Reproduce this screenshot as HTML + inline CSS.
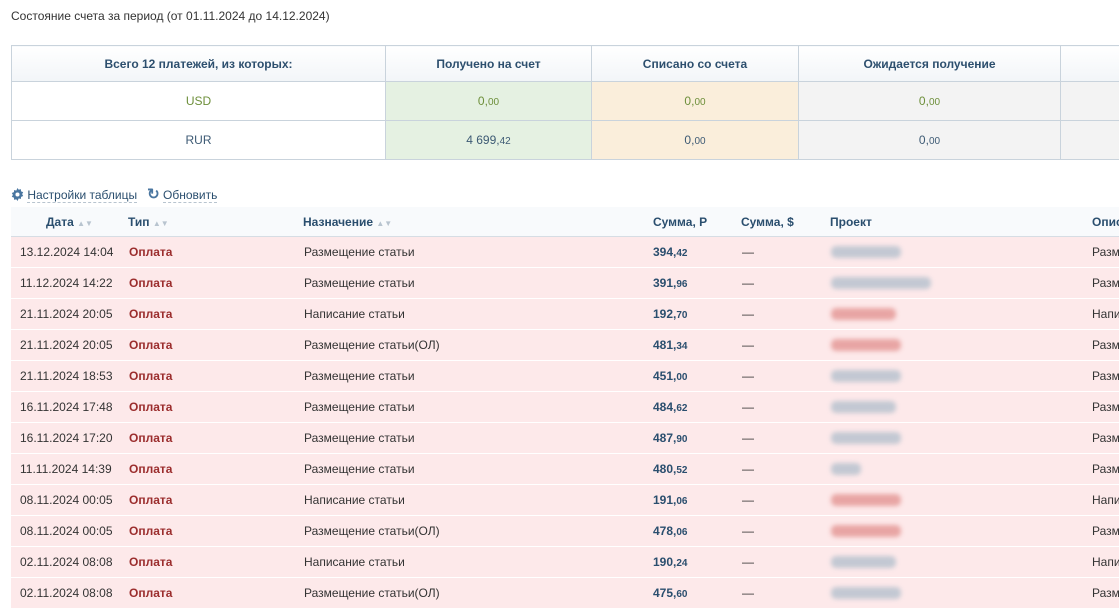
<!DOCTYPE html>
<html><head><meta charset="utf-8"><style>
*{box-sizing:border-box;margin:0;padding:0}
body{width:1119px;height:603px;overflow:hidden;background:#fff;font-family:"Liberation Sans",Arial,sans-serif;font-size:12px;color:#333;position:relative}
.abs{position:absolute}
.title{left:11px;top:9px;font-size:12px;color:#333}
table.sum{position:absolute;left:11px;top:45px;border-collapse:collapse;width:1130px}
.sum td{border:1px solid #c9d3dc;text-align:center;font-size:12px}
.sum tr.h td{height:36px;background:linear-gradient(#fff,#f2f5f8);font-weight:bold;color:#2d4f6e}
.sum tr.r td{height:39px;color:#3d5a74}
.g{background:#e5f1e2}.o{background:#faeedb}.gr{background:#f3f3f3}
.sm{font-size:10px}
.green{color:#6d8f3a!important}
.tools{left:11px;top:185px;color:#2a4e6e;font-size:12px}
.tools span.l{border-bottom:1px dashed #b8c4cf}
.th{position:absolute;top:207px;left:11px;width:1108px;height:30px;background:#f8fafc;border-bottom:1px solid #d6dde4}
.th div{position:absolute;top:8px;font-weight:bold;color:#2a4e6e}
.arr{color:#b8c4cf;font-size:8px;font-weight:normal}
.row{position:absolute;left:11px;width:1108px;height:30px;background:#fde9ea}
.row div{position:absolute;top:8px}
.t{color:#9b2d2d;font-weight:bold}
.s{font-weight:bold;color:#2a4e6e}
.s i{font-style:normal;font-size:10px}
.blur{position:absolute;top:9px;height:12px;border-radius:5px;filter:blur(2.5px);opacity:.85}
</style></head><body>
<div class="abs title">Состояние счета за период (от 01.11.2024 до 14.12.2024)</div>
<table class="sum">
<tr class="h"><td style="width:374px;height:35px">Всего 12 платежей, из которых:</td><td style="width:206px">Получено на счет</td><td style="width:207px">Списано со счета</td><td style="width:262px">Ожидается получение</td><td></td></tr>
<tr class="r"><td class="green">USD</td><td class="g green">0,<span class="sm">00</span></td><td class="o green">0,<span class="sm">00</span></td><td class="gr green">0,<span class="sm">00</span></td><td class="gr"></td></tr>
<tr class="r"><td style="height:38px">RUR</td><td class="g">4 699,<span class="sm">42</span></td><td class="o">0,<span class="sm">00</span></td><td class="gr">0,<span class="sm">00</span></td><td class="gr"></td></tr>
</table>
<div class="abs tools"><svg width="13" height="13" viewBox="0 0 16 16" style="vertical-align:-2px"><path fill="#4a76a0" d="M8 0l1.5 2.2 2.6-.8.3 2.7 2.6 1-1.3 2.4 1.3 2.4-2.6 1-.3 2.7-2.6-.8L8 16l-1.5-2.2-2.6.8-.3-2.7-2.6-1L2.3 8.5 1 6.1l2.6-1 .3-2.7 2.6.8z"/><circle cx="8" cy="8" r="2.5" fill="#fff"/></svg> <span class="l">Настройки таблицы</span> &nbsp; <span style="font-size:15px;font-weight:bold;color:#4a76a0">&#8635;</span> <span class="l">Обновить</span></div>
<div class="th">
<div style="left:35px">Дата <span class="arr">&#9650;&#9660;</span></div>
<div style="left:117px">Тип <span class="arr">&#9650;&#9660;</span></div>
<div style="left:292px">Назначение <span class="arr">&#9650;&#9660;</span></div>
<div style="left:642px">Сумма, Р</div>
<div style="left:730px">Сумма, $</div>
<div style="left:819px">Проект</div>
<div style="left:1081px">Опис</div>
</div>
<div id="rows"></div>
<script>
var d=[["13.12.2024 14:04","Размещение статьи","394","42",0,70],["11.12.2024 14:22","Размещение статьи","391","96",0,100],["21.11.2024 20:05","Написание статьи","192","70",1,65],["21.11.2024 20:05","Размещение статьи(ОЛ)","481","34",1,70],["21.11.2024 18:53","Размещение статьи","451","00",0,70],["16.11.2024 17:48","Размещение статьи","484","62",0,65],["16.11.2024 17:20","Размещение статьи","487","90",0,70],["11.11.2024 14:39","Размещение статьи","480","52",0,30],["08.11.2024 00:05","Написание статьи","191","06",1,70],["08.11.2024 00:05","Размещение статьи(ОЛ)","478","06",1,70],["02.11.2024 08:08","Написание статьи","190","24",0,65],["02.11.2024 08:08","Размещение статьи(ОЛ)","475","60",0,70]];
var h="";d.forEach(function(r,i){var y=237+i*31;h+='<div class="row" style="top:'+y+'px"><div style="left:9px">'+r[0]+'</div><div class="t" style="left:118px">Оплата</div><div style="left:293px">'+r[1]+'</div><div class="s" style="left:642px">'+r[2]+',<i>'+r[3]+'</i></div><div style="left:731px">—</div><span class="blur" style="left:820px;width:'+r[5]+'px;background:'+(r[4]?'#e59a98':'#b9c3cf')+'"></span><div style="left:1081px">'+r[1].slice(0,4)+'</div></div>'});
document.getElementById("rows").innerHTML=h;
</script>
</body></html>
